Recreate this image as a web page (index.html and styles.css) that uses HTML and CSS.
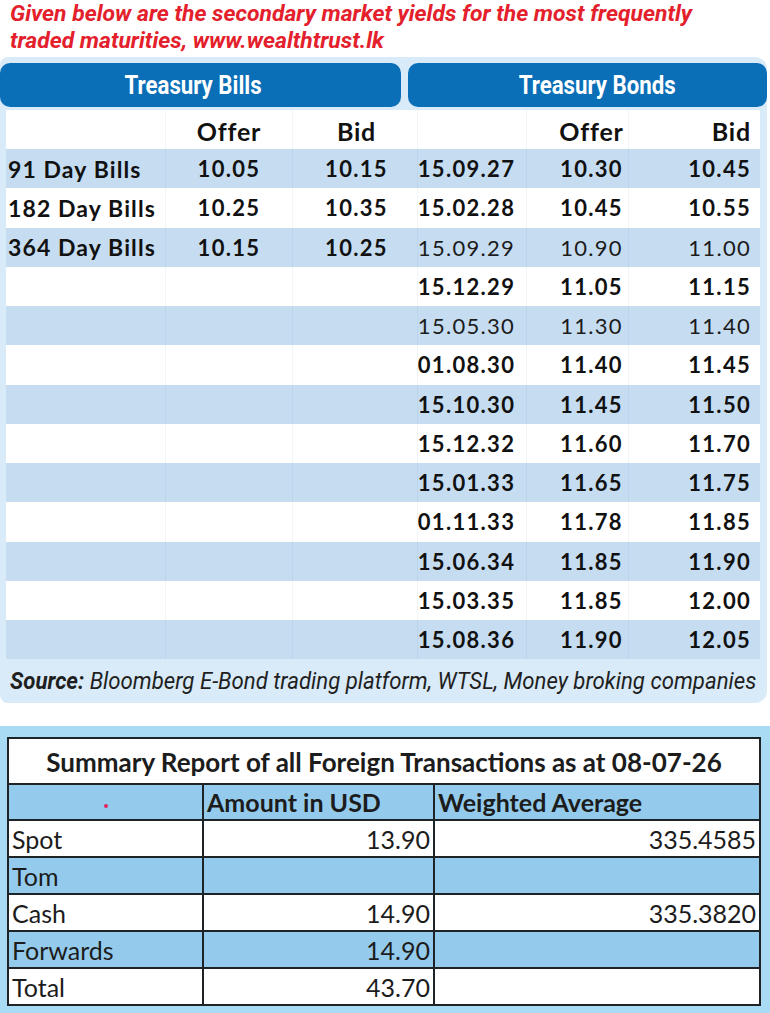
FILE: index.html
```html
<!DOCTYPE html>
<html>
<head>
<meta charset="utf-8">
<link rel="stylesheet" href="styles.css">
</head>
<body>
<div class="title">
  <span class="tline">Given below are the secondary market yields for the most frequently</span>
  <span class="tline">traded maturities, www.wealthtrust.lk</span>
</div>

<div class="panel">
  <div class="pills">
    <div class="pill pill-bills"><span class="ptext">Treasury Bills</span></div>
    <div class="pill pill-bonds"><span class="ptext">Treasury Bonds</span></div>
  </div>
  <div class="yields">
    <div class="row head">
      <div class="c c1"></div><div class="c c2">Offer</div><div class="c c3">Bid</div>
      <div class="c c4"></div><div class="c c5">Offer</div><div class="c c6">Bid</div>
    </div>
    <div class="row blue">
      <div class="c c1">91 Day Bills</div><div class="c c2">10.05</div><div class="c c3">10.15</div>
      <div class="c c4">15.09.27</div><div class="c c5">10.30</div><div class="c c6">10.45</div>
    </div>
    <div class="row">
      <div class="c c1">182 Day Bills</div><div class="c c2">10.25</div><div class="c c3">10.35</div>
      <div class="c c4">15.02.28</div><div class="c c5">10.45</div><div class="c c6">10.55</div>
    </div>
    <div class="row blue">
      <div class="c c1">364 Day Bills</div><div class="c c2">10.15</div><div class="c c3">10.25</div>
      <div class="c c4 reg">15.09.29</div><div class="c c5 reg">10.90</div><div class="c c6 reg">11.00</div>
    </div>
    <div class="row">
      <div class="c c1"></div><div class="c c2"></div><div class="c c3"></div>
      <div class="c c4">15.12.29</div><div class="c c5">11.05</div><div class="c c6">11.15</div>
    </div>
    <div class="row blue">
      <div class="c c1"></div><div class="c c2"></div><div class="c c3"></div>
      <div class="c c4 reg">15.05.30</div><div class="c c5 reg">11.30</div><div class="c c6 reg">11.40</div>
    </div>
    <div class="row">
      <div class="c c1"></div><div class="c c2"></div><div class="c c3"></div>
      <div class="c c4">01.08.30</div><div class="c c5">11.40</div><div class="c c6">11.45</div>
    </div>
    <div class="row blue">
      <div class="c c1"></div><div class="c c2"></div><div class="c c3"></div>
      <div class="c c4">15.10.30</div><div class="c c5">11.45</div><div class="c c6">11.50</div>
    </div>
    <div class="row">
      <div class="c c1"></div><div class="c c2"></div><div class="c c3"></div>
      <div class="c c4">15.12.32</div><div class="c c5">11.60</div><div class="c c6">11.70</div>
    </div>
    <div class="row blue">
      <div class="c c1"></div><div class="c c2"></div><div class="c c3"></div>
      <div class="c c4">15.01.33</div><div class="c c5">11.65</div><div class="c c6">11.75</div>
    </div>
    <div class="row">
      <div class="c c1"></div><div class="c c2"></div><div class="c c3"></div>
      <div class="c c4">01.11.33</div><div class="c c5">11.78</div><div class="c c6">11.85</div>
    </div>
    <div class="row blue">
      <div class="c c1"></div><div class="c c2"></div><div class="c c3"></div>
      <div class="c c4">15.06.34</div><div class="c c5">11.85</div><div class="c c6">11.90</div>
    </div>
    <div class="row">
      <div class="c c1"></div><div class="c c2"></div><div class="c c3"></div>
      <div class="c c4">15.03.35</div><div class="c c5">11.85</div><div class="c c6">12.00</div>
    </div>
    <div class="row blue">
      <div class="c c1"></div><div class="c c2"></div><div class="c c3"></div>
      <div class="c c4">15.08.36</div><div class="c c5">11.90</div><div class="c c6">12.05</div>
    </div>
  </div>
  <div class="source"><span class="stext"><b>Source:</b> Bloomberg E-Bond trading platform, WTSL, Money broking companies</span></div>
</div>

<div class="fx-panel">
  <table class="fx">
    <colgroup><col class="col1"><col class="col2"><col class="col3"></colgroup>
    <tr class="fx-title"><td colspan="3">Summary Report of all Foreign Transactions as at 08-07-26</td></tr>
    <tr class="fx-head blue2"><td class="dotcell"><span class="dot"></span></td><td>Amount in USD</td><td>Weighted Average</td></tr>
    <tr><td>Spot</td><td class="num">13.90</td><td class="num">335.4585</td></tr>
    <tr class="blue2"><td>Tom</td><td class="num"></td><td class="num"></td></tr>
    <tr><td>Cash</td><td class="num">14.90</td><td class="num">335.3820</td></tr>
    <tr class="blue2"><td>Forwards</td><td class="num">14.90</td><td class="num"></td></tr>
    <tr><td>Total</td><td class="num">43.70</td><td class="num"></td></tr>
  </table>
</div>
</body>
</html>
```
FILE: styles.css
```css
html, body {
  margin: 0;
  padding: 0;
  background: #ffffff;
}
body {
  width: 770px;
  height: 1013px;
  overflow: hidden;
}
.title {
  padding: 0 0 0 10px;
  height: 55px;
  box-sizing: border-box;
  font-family: Roboto, "Liberation Sans", sans-serif;
  font-style: italic;
  font-weight: bold;
  font-size: 24px;
  line-height: 27px;
  color: #e3202b;
}
.tline {
  display: block;
  white-space: nowrap;
  width: 740px;
  transform: scale(0.954, 0.95);
  transform-origin: left center;
}
.panel {
  margin-top: 2px;
  width: 767px;
  height: 646px;
  box-sizing: border-box;
  background: #d9ebf8;
  border-radius: 8px 12px 12px 8px;
  padding-top: 6px;
  overflow: hidden;
}
.pills {
  display: flex;
  gap: 7px;
  height: 44px;
}
.pill {
  background: #0b6fb8;
  border-radius: 10px;
  color: #ffffff;
  font-family: Roboto, "Liberation Sans", sans-serif;
  font-weight: bold;
  font-size: 25px;
  display: flex;
  align-items: center;
  justify-content: center;
}
.ptext {
  display: inline-block;
  white-space: nowrap;
  transform: scaleX(0.89);
}
.pill-bills {
  width: 401px;
  padding-right: 14px;
  box-sizing: border-box;
}
.pill-bonds {
  flex: 1;
  padding-left: 20px;
}
.yields {
  margin: 3px 0 0 6px;
  width: 754px;
  background: #ffffff;
}
.row {
  display: grid;
  grid-template-columns: 159px 127px 125px 109px 102px 132px;
  height: 39.25px;
}
.row.head {
  height: 39px;
}
.row.blue {
  background: #c6ddf1;
}
.c {
  font-family: Lato, "Open Sans", sans-serif;
  font-weight: bold;
  font-size: 22px;
  letter-spacing: 1.3px;
  color: #111111;
  display: flex;
  align-items: center;
  white-space: nowrap;
  border-left: 1px solid rgba(30, 80, 130, 0.06);
  box-sizing: border-box;
}
.head .c {
  font-size: 25px;
  letter-spacing: 0.8px;
  padding-top: 3px;
}
.c.reg {
  font-weight: normal;
  color: #1c1c1c;
}
.c1 {
  padding-left: 2px;
  border-left: none;
  font-size: 23px;
  letter-spacing: 1.1px;
}
.c2 {
  justify-content: center;
}
.c3 {
  justify-content: center;
  padding-left: 3px;
}
.c4 {
  justify-content: center;
  padding-right: 11px;
}
.c5 {
  justify-content: center;
  padding-left: 28px;
}
.c6 {
  justify-content: flex-end;
  padding-right: 9px;
}
.source {
  height: 44px;
  display: flex;
  align-items: center;
  padding-left: 10px;
  font-family: Roboto, "Liberation Sans", sans-serif;
  font-style: italic;
  font-size: 24px;
  color: #1f1f1f;
}
.stext {
  display: inline-block;
  white-space: nowrap;
  transform: scaleX(0.925);
  transform-origin: left center;
}
.source b {
  font-weight: bold;
}
.fx-panel {
  margin-top: 23px;
  height: 287px;
  background: #a9dbf4;
  padding: 11px 0 0 7px;
  box-sizing: border-box;
}
.fx {
  border-collapse: collapse;
  width: 752px;
  table-layout: fixed;
  background: #ffffff;
  font-family: Lato, "Open Sans", sans-serif;
  font-size: 25px;
  color: #1c1c1c;
}
.col1 { width: 195px; }
.col2 { width: 231px; }
.col3 { width: 326px; }
.fx td {
  border: 2px solid #1e2328;
  height: 37px;
  padding: 0 3px;
  white-space: nowrap;
  line-height: 26px;
  box-sizing: border-box;
}
.fx-title td {
  height: 46px;
  text-align: center;
  font-weight: bold;
  font-size: 26px;
  padding-top: 2px;
}
.fx-head td {
  font-weight: bold;
  height: 36px;
}
.blue2 td {
  background: #94cbec;
}
.num {
  text-align: right;
}
.dotcell {
  text-align: center;
}
.dot {
  display: inline-block;
  width: 4px;
  height: 4px;
  border-radius: 50%;
  background: #e0245e;
  vertical-align: middle;
}
```
